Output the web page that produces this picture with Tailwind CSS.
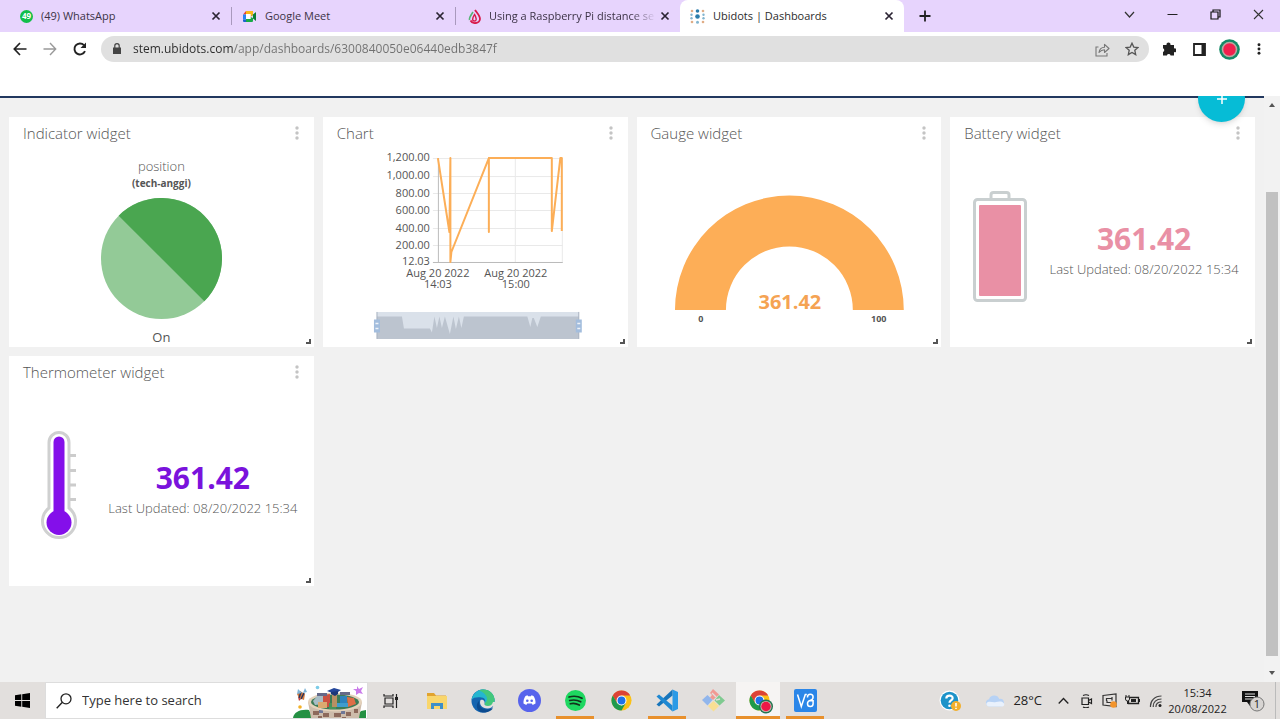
<!DOCTYPE html>
<html lang="en">
<head>
<meta charset="utf-8">
<meta name="viewport" content="width=device-width, initial-scale=1">
<title>Ubidots | Dashboards</title>
<script src="https://cdn.jsdelivr.net/npm/@tailwindcss/browser@4"></script>
</head>
<body class="flex h-screen flex-col overflow-hidden bg-[#f1f1f1] font-['Open_Sans','Noto_Sans',sans-serif] text-[#555]">

<svg class="hidden" aria-hidden="true">
  <symbol id="close" viewBox="0 0 10 10"><path d="M1.5 1.5l7 7M8.5 1.5l-7 7" stroke="#2b2433" stroke-width="1.7" fill="none"/></symbol>
  <symbol id="kebab" viewBox="0 0 4 14"><circle cx="2" cy="2" r="1.7"/><circle cx="2" cy="7" r="1.7"/><circle cx="2" cy="12" r="1.7"/></symbol>
  <symbol id="grip" viewBox="0 0 6 6"><path d="M5 1v4H1" stroke="#555" stroke-width="2" fill="none"/></symbol>
  <symbol id="chrome" viewBox="0 0 24 24">
    <circle cx="12" cy="12" r="11.5" fill="#fbc116"/>
    <path d="M12 6.300H22A11.500 11.500 0 0 0 2 6.300L7 15z" fill="#dc4336"/>
    <path d="M2 6.300L7 14.900L12 17.700L16.900 14.900L12 23.500A11.500 11.500 0 0 1 2 6.300z" fill="#1e9a4c"/>
    <circle cx="12" cy="12" r="5.700" fill="#fff"/><circle cx="12" cy="12" r="4.500" fill="#1f72e8"/>
  </symbol>
</svg>

<!-- Tab strip -->
<header class="flex h-8 shrink-0 items-stretch bg-[#e7d4fd] pl-2 text-[11px] text-[#3c3346]">
  <div class="flex min-w-0 flex-1 items-stretch">
    <div class="flex w-56 items-center pl-3">
      <svg class="mr-2 size-[13px] shrink-0" viewBox="0 0 13 13"><circle cx="6.500" cy="6.500" r="6.500" fill="#12bf4b"/><text x="6.500" y="9.300" font-size="8" font-weight="700" fill="#fff" text-anchor="middle">49</text></svg>
      <a href="#" class="flex-1 overflow-hidden whitespace-nowrap">(49) WhatsApp</a>
      <button aria-label="Close tab"><svg class="size-2.5"><use href="#close"/></svg></button>
      <span class="ml-2.5 h-[18px] w-px bg-[#a999bd]"></span>
    </div>
    <div class="flex w-56 items-center pl-2.5">
      <svg class="mr-2 size-[15px] shrink-0" viewBox="0 0 15 15"><path d="M4 2h7v4L8.500 8V5H4z" fill="#fbb916"/><path d="M4 2v3.500H1z" fill="#e8412f"/><path d="M1 5.500h3v5H1z" fill="#2584f4"/><path d="M1 10.500h3V13H2a1 1 0 0 1-1-1z" fill="#1c62cf"/><path d="M4 10h4.500V8l2.500 1v3a1 1 0 0 1-1 1H4z" fill="#18ab47"/><path d="M4 5h4.500v5H4z" fill="#fff"/><path d="M8.500 7.500L14 3v9l-3-2.400V6z" fill="#0b7f35"/></svg>
      <a href="#" class="flex-1 overflow-hidden whitespace-nowrap">Google Meet</a>
      <button aria-label="Close tab"><svg class="size-2.5"><use href="#close"/></svg></button>
      <span class="ml-2.5 h-[18px] w-px bg-[#a999bd]"></span>
    </div>
    <div class="flex w-56 items-center pr-2.5 pl-3">
      <svg class="mr-2 h-[15px] w-[13px] shrink-0" viewBox="0 0 13 15"><path d="M7 1C9.500 4.500 12 7 12 10a5 4.500 0 0 1-9.500 1.500" fill="none" stroke="#d81b4a" stroke-width="1.800"/><path d="M6.500 5.500C8.500 8.500 9 12 6.500 12S4 9.500 6.500 5.500z" fill="none" stroke="#d81b4a" stroke-width="1.400"/><path d="M5 3C3.500 5.500 1 8 1.500 11" fill="none" stroke="#57b478" stroke-width="1.600"/></svg>
      <a href="#" class="mr-1 flex-1 overflow-hidden mask-r-from-85% whitespace-nowrap">Using a Raspberry Pi distance se</a>
      <button aria-label="Close tab"><svg class="size-2.5"><use href="#close"/></svg></button>
    </div>
    <div class="flex w-56 items-center rounded-t-lg bg-white pr-2.5 pl-2.5 text-[#2c2c2c]">
      <svg class="mr-2 size-[15px] shrink-0" viewBox="0 0 15 15"><g fill="#e0ad86"><circle cx="2" cy="2" r="1.300"/><circle cx="13" cy="2" r="1.300"/><circle cx="2" cy="13" r="1.300"/><circle cx="13" cy="13" r="1.300"/></g><g fill="#83b5cf"><circle cx="1.500" cy="5.700" r="1.200"/><circle cx="1.500" cy="9.300" r="1.200"/><circle cx="13.500" cy="5.700" r="1.200"/><circle cx="13.500" cy="9.300" r="1.200"/><circle cx="7.500" cy="13.200" r="1.500"/></g><g fill="#2a7cab"><circle cx="7.500" cy="2" r="1.800"/><circle cx="7.500" cy="7.500" r="2.300"/></g></svg>
      <a href="#" class="flex-1 overflow-hidden whitespace-nowrap">Ubidots | Dashboards</a>
      <button aria-label="Close tab"><svg class="size-2.5"><use href="#close"/></svg></button>
    </div>
    <button aria-label="New tab" class="flex w-[42px] items-center justify-center"><svg class="size-3" viewBox="0 0 12 12"><path d="M6 .5v11M.5 6h11" stroke="#222" stroke-width="1.800"/></svg></button>
  </div>
  <div class="flex items-center pb-1">
    <button aria-label="Search tabs" class="flex w-[43px] justify-center"><svg class="size-[11px]" viewBox="0 0 11 11"><path d="M1 3l4.500 5L10 3" stroke="#333" fill="none" stroke-width="1.200"/></svg></button>
    <button aria-label="Minimize" class="flex w-[43px] justify-center"><svg class="size-[11px]" viewBox="0 0 11 11"><path d="M.5 5.500h10" stroke="#222"/></svg></button>
    <button aria-label="Restore" class="flex w-[43px] justify-center"><svg class="size-[11px]" viewBox="0 0 11 11"><path d="M1 3h7v7H1zM3 3V1h7v7H8" stroke="#111" stroke-width="1.200" fill="none"/></svg></button>
    <button aria-label="Close window" class="flex w-[43px] justify-center"><svg class="size-[11px]" viewBox="0 0 11 11"><path d="M1 1l9 9M10 1l-9 9" stroke="#333" stroke-width="1.100"/></svg></button>
  </div>
</header>

<!-- Address bar -->
<nav class="flex h-[34px] shrink-0 items-center bg-white pr-1.5 pl-[5px]">
  <button aria-label="Back" class="flex w-[30px] justify-center"><svg class="size-3.5" viewBox="0 0 14 14"><path d="M13.500 7H1.500M7 1L1.300 7L7 13" stroke="#222" stroke-width="1.700" fill="none"/></svg></button>
  <button aria-label="Forward" class="flex w-[30px] justify-center"><svg class="size-3.5" viewBox="0 0 14 14"><path d="M.5 7h12M7 1l5.700 6L7 13" stroke="#999" stroke-width="1.400" fill="none"/></svg></button>
  <button aria-label="Reload" class="flex w-[30px] justify-center"><svg class="size-3.5" viewBox="0 0 14 14"><path d="M12 9.200A5.500 5.500 0 1 1 11 3.200" stroke="#222" stroke-width="1.900" fill="none"/><path d="M13 .5v5.500H7.500z" fill="#222"/></svg></button>
  <div class="mr-[5px] ml-1.5 flex h-[26px] min-w-0 flex-1 items-center rounded-full bg-[#e0e0e0] pr-0.5 pl-3">
    <svg class="mr-3 h-3 w-2 shrink-0" viewBox="0 0 8 12"><path d="M0 4.500h8V11H0z" fill="#444"/><path d="M1.800 5V2.800a2.200 2.200 0 0 1 4.400 0V5" stroke="#444" stroke-width="1.200" fill="none"/></svg>
    <input aria-label="Address" type="text" value="stem.ubidots.com/app/dashboards/6300840050e06440edb3847f" class="min-w-0 flex-1 bg-[linear-gradient(90deg,#2b2b2b_101px,#707070_101px)] bg-clip-text text-[12px] text-transparent outline-none">
    <button aria-label="Share" class="flex w-[30px] justify-center"><svg class="size-[15px]" viewBox="0 0 15 15"><path d="M3.500 5H1v9h11v-3" stroke="#777" stroke-width="1.100" fill="none"/><path d="M4 10.500C4.500 7 6.500 5.300 9.500 5.200V2.300L14 6.500l-4.500 4V7.800C7 7.800 5.500 8.700 4 10.500z" stroke="#777" stroke-width="1.100" fill="none" stroke-linejoin="round"/></svg></button>
    <button aria-label="Bookmark" class="flex w-[30px] justify-center"><svg class="size-3.5" viewBox="0 0 14 14"><path d="M7 1.200l1.800 3.900 4.200.4-3.200 2.800.9 4.300L7 10.400l-3.700 2.200.9-4.300L1 5.500l4.200-.4z" stroke="#555" stroke-width="1.300" fill="none"/></svg></button>
  </div>
  <button aria-label="Extensions" class="flex w-[30px] justify-center"><svg class="size-3.5" viewBox="0 0 14 14"><path d="M1 3h3.600a2 2 0 1 1 3.800 0H12v3.400a1.900 1.900 0 1 1 0 3.700V13.500H8.600a1.900 1.900 0 0 0-3.700 0H1V9.900a1.900 1.900 0 0 0 0-3.600z" fill="#222"/></svg></button>
  <button aria-label="Side panel" class="flex w-[30px] justify-center"><svg class="size-[13px]" viewBox="0 0 13 13"><path d="M1 1h11v11H1z" stroke="#222" stroke-width="1.800" fill="none"/><path d="M8.500 1H12v11H8.500z" fill="#222"/></svg></button>
  <button aria-label="Profile" class="flex w-[30px] justify-center"><svg class="size-[21px]" viewBox="0 0 21 21"><circle cx="10.500" cy="10.500" r="10.300" fill="#138a66"/><circle cx="10.500" cy="10.500" r="7.800" fill="#b9a8a0"/><circle cx="10.500" cy="10.500" r="6.200" fill="#f1204d"/></svg></button>
  <button aria-label="Browser menu" class="flex w-[30px] justify-center"><svg class="h-3 w-1 fill-[#222]"><use href="#kebab"/></svg></button>
</nav>
<div class="h-[30px] shrink-0 bg-white"></div>

<!-- Dashboard viewport -->
<div class="flex min-h-0 flex-1">
  <main class="relative min-w-0 flex-1 overflow-hidden">
    <div class="h-0.5 bg-[#22385f]"></div>
    <div class="grid auto-rows-[230px] grid-cols-4 gap-[9px] px-[9px] pt-[19px]">

      <section class="relative flex flex-col bg-white">
        <div class="flex h-8 shrink-0 items-center justify-between pr-[15px] pl-3.5"><h2 class="text-[15px] leading-6 font-light">Indicator widget</h2><button aria-label="Widget menu"><svg class="h-3.5 w-1 fill-[#c4c4c4]"><use href="#kebab"/></svg></button></div>
        <div class="flex flex-1 flex-col items-center pt-[7px]">
          <p class="text-[13px] leading-5 font-light">position</p>
          <p class="text-[10px] leading-[14px] font-bold">(tech-anggi)</p>
          <svg class="mt-2 size-[121px]" viewBox="0 0 121 121"><circle cx="60.500" cy="60.500" r="60.500" fill="#93ca97"/><path d="M17.700 17.700A60.500 60.500 0 0 1 103.300 103.300z" fill="#4aa650"/></svg>
          <p class="mt-2 text-[13px] leading-5">On</p>
        </div>
        <svg class="absolute right-[3px] bottom-[3px] size-1.5"><use href="#grip"/></svg>
      </section>

      <section class="relative flex flex-col bg-white">
        <div class="flex h-8 shrink-0 items-center justify-between pr-[15px] pl-3.5"><h2 class="text-[15px] leading-6 font-light">Chart</h2><button aria-label="Widget menu"><svg class="h-3.5 w-1 fill-[#c4c4c4]"><use href="#kebab"/></svg></button></div>
        <svg class="min-h-0 w-full flex-1" viewBox="323 149 305 198" role="img" aria-label="Distance over time">
          <path d="M433 158.500H563M433 176.500H563M433 193.500H563M433 210.500H563M433 228.500H563M433 245.500H563M515.500 158V262M562.500 158V262" stroke="#e9e9e9" fill="none"/>
          <path d="M438.500 158V262.500M433 262.500H563" stroke="#bbb" fill="none"/>
          <path d="M438 158L449.500 232L450.500 158V262L451.500 252L489 158V232V158H552V231L560.500 158H562V231" stroke="#fcae57" stroke-width="2" fill="none" stroke-linejoin="round"/>
          <g font-size="11" fill="#555" text-anchor="end"><text x="430" y="161">1,200.00</text><text x="430" y="179">1,000.00</text><text x="430" y="197">800.00</text><text x="430" y="214">600.00</text><text x="430" y="232">400.00</text><text x="430" y="249">200.00</text><text x="430" y="265">12.03</text></g>
          <g font-size="11" fill="#555" text-anchor="middle"><text x="438" y="277">Aug 20 2022</text><text x="438" y="288">14:03</text><text x="516" y="277">Aug 20 2022</text><text x="516" y="288">15:00</text></g>
          <path d="M377 312h202v27H377z" fill="#dae1ea"/>
          <path d="M377 316.500H402L404 328.500H430L432 332.500L434.500 316.500L437 328L439.500 316.500L442 328L445 316.500L450 334L453.500 316.500L456 329L459 316.500L461.500 328L464 316.500H527.500L530.500 327L532.500 318L534 318L537.500 327L541 316.500H579V339H377z" fill="#bcc4cf"/>
          <path d="M377 312v27M579 312v27" stroke="#a7b1c0"/>
          <path d="M374 319.500h6v13h-6zM576 319.500h6v13h-6z" fill="#a3bddd"/>
          <path d="M375.500 323.500h3M375.500 328.500h3M577.500 323.500h3M577.500 328.500h3" stroke="#eef3f9" stroke-width="1.500"/>
        </svg>
        <svg class="absolute right-[3px] bottom-[3px] size-1.5"><use href="#grip"/></svg>
      </section>

      <section class="relative flex flex-col bg-white">
        <div class="flex h-8 shrink-0 items-center justify-between pr-[15px] pl-3.5"><h2 class="text-[15px] leading-6 font-light">Gauge widget</h2><button aria-label="Widget menu"><svg class="h-3.5 w-1 fill-[#c4c4c4]"><use href="#kebab"/></svg></button></div>
        <svg class="min-h-0 w-full flex-1" viewBox="637 149 305 198" role="img" aria-label="Gauge from 0 to 100">
          <path d="M675 310A114.500 114.500 0 0 1 904 310H853A63.500 63.500 0 0 0 726 310z" fill="#fdae57"/>
          <text x="790" y="309" font-size="20" font-weight="700" fill="#f5a353" text-anchor="middle">361.42</text>
          <g font-size="9" font-weight="700" fill="#555" text-anchor="middle"><text x="701" y="322">0</text><text x="879" y="322">100</text></g>
        </svg>
        <svg class="absolute right-[3px] bottom-[3px] size-1.5"><use href="#grip"/></svg>
      </section>

      <section class="relative flex flex-col bg-white">
        <div class="flex h-8 shrink-0 items-center justify-between pr-[15px] pl-3.5"><h2 class="text-[15px] leading-6 font-light">Battery widget</h2><button aria-label="Widget menu"><svg class="h-3.5 w-1 fill-[#c4c4c4]"><use href="#kebab"/></svg></button></div>
        <div class="flex flex-1 items-center pb-1">
          <div class="flex w-[83px] shrink-0 justify-center pl-4">
            <svg class="h-[111px] w-[54px]" viewBox="0 0 54 111"><path d="M18 9V4a2.500 2.500 0 0 1 2.500-2.500h13A2.500 2.500 0 0 1 36 4v5" fill="none" stroke="#c9cfd0" stroke-width="3"/><rect x="1.500" y="8.500" width="51" height="101" rx="3" fill="#fff" stroke="#c9cfd0" stroke-width="3"/><rect x="6" y="14" width="42" height="91" rx="1" fill="#e990a5"/></svg>
          </div>
          <div class="min-w-0 flex-1 pt-2.5 text-center">
            <p class="text-[30px] leading-9 font-bold text-[#e990a5]">361.42</p>
            <p class="text-[13px] leading-6 font-light">Last Updated: 08/20/2022 15:34</p>
          </div>
        </div>
        <svg class="absolute right-[3px] bottom-[3px] size-1.5"><use href="#grip"/></svg>
      </section>

      <section class="relative flex flex-col bg-white">
        <div class="flex h-8 shrink-0 items-center justify-between pr-[15px] pl-3.5"><h2 class="text-[15px] leading-6 font-light">Thermometer widget</h2><button aria-label="Widget menu"><svg class="h-3.5 w-1 fill-[#c4c4c4]"><use href="#kebab"/></svg></button></div>
        <div class="flex flex-1 items-center pb-1">
          <div class="flex w-[83px] shrink-0 justify-center pl-4">
            <svg class="h-[111px] w-[38px]" viewBox="0 0 38 111"><path d="M9 12.500a10 10 0 0 1 20 0V78a16.500 16.500 0 1 1-20 0z" fill="#fff" stroke="#cfd0d0" stroke-width="3"/><path d="M30 25.500h6M30 40.500h6M30 55h6M30 69.500h6" stroke="#ccc" stroke-width="3"/><path d="M19 12v78" stroke="#840fea" stroke-width="11" stroke-linecap="round"/><circle cx="19" cy="92.500" r="12.500" fill="#840fea"/></svg>
          </div>
          <div class="min-w-0 flex-1 pt-2.5 text-center">
            <p class="text-[30px] leading-9 font-bold text-[#7a12dc]">361.42</p>
            <p class="text-[13px] leading-6 font-light">Last Updated: 08/20/2022 15:34</p>
          </div>
        </div>
        <svg class="absolute right-[3px] bottom-[3px] size-1.5"><use href="#grip"/></svg>
      </section>
    </div>
    <button aria-label="Add widget" class="absolute -top-[21px] right-[19px] flex size-[47px] items-center justify-center rounded-full bg-[#06bcd6] shadow-md"><svg class="size-2.5" viewBox="0 0 10 10"><path d="M5 0v10M0 5h10" stroke="#fff" stroke-width="1.500"/></svg></button>
  </main>

  <div class="flex w-4 flex-col items-center bg-[#f2f2f2]" aria-hidden="true">
    <svg class="h-[17px] w-2 shrink-0" viewBox="0 0 8 17"><path d="M1 11l3-4 3 4z" fill="#555"/></svg>
    <div class="flex-[79]"></div>
    <div class="w-3 flex-[464] bg-[#c1c1c1]"></div>
    <div class="flex-[9]"></div>
    <svg class="h-[17px] w-2 shrink-0" viewBox="0 0 8 17"><path d="M1 6l3 4 3-4z" fill="#555"/></svg>
  </div>
</div>

<!-- Taskbar -->
<footer class="flex h-[37px] shrink-0 items-stretch bg-[#e2dfdd]">
  <button aria-label="Start" class="flex w-[45px] items-center justify-center"><svg class="size-[15px]" viewBox="0 0 15 15"><path d="M0 2.200L6.300 1.300V7H0zM7.200 1.200L15 0V7H7.200zM0 8h6.300v5.700L0 12.800zM7.200 8H15v7l-7.800-1.200z" fill="#000"/></svg></button>
  <label class="flex w-[323px] items-center border border-[#ddd] bg-white pl-2.5">
    <svg class="mr-2.5 size-4 shrink-0" viewBox="0 0 16 16"><circle cx="10" cy="5.800" r="5" stroke="#222" stroke-width="1.300" fill="none"/><path d="M6.400 9.300L.7 15.200" stroke="#222" stroke-width="1.400"/></svg>
    <input type="text" aria-label="Search" placeholder="Type here to search" class="w-0 flex-1 text-[13px] text-[#333] outline-none placeholder:text-[#333]">
    <svg class="h-[35px] w-[74px] shrink-0" viewBox="0 0 74 35">
      <path d="M0 35C1 29 7 26 16 27L20 35z" fill="#249043"/><path d="M68 28l5-1v8H62z" fill="#249043"/>
      <path d="M15 19L18 35H66L69 19z" fill="#cdbcab"/>
      <g fill="#8d6a5c"><path d="M20 28h6v4h-6zM30 30h6v4h-6zM41 30h7v4h-7zM53 29h5v4h-5zM61 26h4v4h-4zM25 33h4v2h-4zM49 34h4v1h-4z"/></g>
      <g fill="#6f7797"><path d="M26 27h4v3h-4zM48 28h4v3h-4z"/></g>
      <ellipse cx="42" cy="19" rx="27" ry="9.500" fill="#e4d2bb"/><ellipse cx="42" cy="19" rx="24" ry="7.500" fill="#3d7b56"/>
      <path d="M20 18l5-6 6 1v8l-9 1z" fill="#a8bdc6"/><path d="M30 12l7-1v13h-7z" fill="#cc5142"/><path d="M47 13h7v11h-7z" fill="#2d82bd"/><path d="M54 14l7 1 2 6-8 3z" fill="#df6e47"/><path d="M25 19h9v6h-9z" fill="#dcaa70"/><path d="M36 20h7v6h-7z" fill="#49935a"/><path d="M43 20h12v4H43z" fill="#3f9cce"/>
      <path d="M24 10h10v3H24zM47 9h10v3H47z" fill="#656989"/><path d="M39 11h5v13h-5z" fill="#b99063"/>
      <path d="M34 8l7-3 7 2-6 4z" fill="#25479b"/><path d="M38 9v2l4 2 3-2V8z" fill="#1c3779"/>
      <path d="M7 8l5 3-1 6-5-2-2-4z" fill="#d37a3e"/><path d="M8 9l-2 6M11 10l-3 6" stroke="#29345c" stroke-width="1.500"/><path d="M5 6l4 4-5 1zM12 5l2 4-4 1z" fill="#7eb3d5"/><path d="M5 14l3 2-2 2z" fill="#c13d38"/>
      <circle cx="24.500" cy="4.500" r="1.800" fill="#7ccce8"/><circle cx="7" cy="24" r="1.800" fill="#f3b227"/><path d="M64 3l2 3 4-2-2 4 2 3-4-1-3 2 0-4-3-2 4 0z" fill="#ca7bea"/>
    </svg>
  </label>
  <button aria-label="Task view" class="flex w-[46px] items-center justify-center"><svg class="size-4" viewBox="0 0 16 16"><path d="M1 1v2h9V1M2 5h8v6H2zM1 15v-2h9v2M13.500 1v14" stroke="#222" stroke-width="1.200" fill="none"/><path d="M12 4h3v3h-3z" fill="#222"/></svg></button>
  <button aria-label="File Explorer" class="flex w-[46px] items-center justify-center"><svg class="size-5" viewBox="0 0 20 20"><path d="M0 2h7l2 2.500h10V12H0z" fill="#e1a32f"/><path d="M0 5h20v13H0z" fill="#f9d66c"/><path d="M4 18v-6h12v6h-3v-3H7v3z" fill="#3e8fc8"/></svg></button>
  <button aria-label="Edge" class="flex w-[46px] items-center justify-center"><svg class="size-6" viewBox="0 0 24 24"><circle cx="12" cy="12" r="11.500" fill="#1565b0"/><path d="M.6 11C2 3 8 .5 12 .5c7 0 11.500 5 11.500 10.500 0 4-3 6-6.500 6-2.500 0-4-1-3.500-2.500 1.500-2 1-5.500-3-6C6 8 2 8.500.6 11z" fill="#24b6cf"/><path d="M12 .5c7 0 11.500 5 11.500 10.500 0 4-3 6-6.500 6-2.500 0-4-1-3.500-2.500C18 12 17 5 8 1.300z" fill="#44c77b"/><path d="M8 13c0 6 5 9 13 6.500l1 0C19 23 14 24.500 10 23 4 21 5 13 9.500 11C8.500 11.500 8 12 8 13z" fill="#0c4b8f"/><path d="M9.500 11C7.500 16 12 20 17 19.500c2 0 4-1 5-2.500l2 2v-6h-2c-1 3-3 4-5 4-2.500 0-4-1-3.500-2.500.5-1.500-.5-4.500-4-3.500z" fill="#e2dfdd"/></svg></button>
  <button aria-label="Discord" class="flex w-[46px] items-center justify-center"><svg class="size-[23px]" viewBox="0 0 23 23"><circle cx="11.500" cy="11.500" r="11.500" fill="#5763ec"/><path d="M7.500 7l2-.7.6 1h2.800l.6-1 2 .7c1.500 2.200 2.200 4.800 2 7.500l-2.800 1.500-.9-1.500H9.200L8.300 16l-2.800-1.500c-.2-2.700.5-5.300 2-7.500z" fill="#fff"/><circle cx="9.300" cy="11.700" r="1.300" fill="#5763ec"/><circle cx="13.700" cy="11.700" r="1.300" fill="#5763ec"/></svg></button>
  <button aria-label="Spotify" class="relative flex w-[46px] items-center justify-center"><svg class="size-[21px]" viewBox="0 0 21 21"><circle cx="10.500" cy="10.500" r="10.500" fill="#1ed760"/><path d="M4 7c4.500-1.300 9-.9 13 1.300M4.700 10.500c4-1 7.500-.6 11 1.300M5.300 13.800c3-.8 6-.4 9 1.200" stroke="#12311c" stroke-width="1.700" fill="none" stroke-linecap="round"/></svg><span class="absolute inset-x-1 bottom-0 h-[3px] bg-[#e8902c]"></span></button>
  <button aria-label="Chrome" class="flex w-[46px] items-center justify-center"><svg class="size-[21px]"><use href="#chrome"/></svg></button>
  <button aria-label="Visual Studio Code" class="relative flex w-[46px] items-center justify-center"><svg class="size-[23px]" viewBox="0 0 23 23"><path d="M16.500.5L22 3v17l-5.500 2.500z" fill="#2b9ae6"/><path d="M16.500.5v6L3 17.500l-2.500-2z" fill="#1775bb"/><path d="M16.500 22.500v-6L3 5.500l-2.500 2z" fill="#1f88d2"/></svg><span class="absolute inset-x-1 bottom-0 h-[3px] bg-[#e8902c]"></span></button>
  <button aria-label="Git" class="flex w-[46px] items-center justify-center"><svg class="size-[23px]" viewBox="0 0 23 23"><path d="M11 0l6 5.500-6 5.500-3-2.500 2-2.500-2-2z" fill="#f19a93"/><path d="M5.500 6l5 5-5 5.500L0 11z" fill="#91b6ec"/><path d="M17 6l6 5.500-5.500 5-5-5z" fill="#7fca90"/><path d="M11.500 12l5.500 5-5.500 5.500L6 17z" fill="#f8df93"/><path d="M10 4l4 4M14 11l4-1" stroke="#e2dfdd" stroke-width="1.300"/></svg></button>
  <button aria-label="Chrome, active window" class="relative flex w-[46px] items-center justify-center border-r-2 border-[#e2dfdd] bg-[#f6f4f3] pt-0.5 pl-1.5"><svg class="size-6" viewBox="0 0 24 24"><use href="#chrome" width="21" height="21"/><circle cx="17" cy="16.500" r="7" fill="#21734f"/><circle cx="17" cy="16.500" r="5.600" fill="#c9b9b0"/><circle cx="17" cy="16.500" r="4.700" fill="#ed1846"/></svg><span class="absolute inset-x-0 bottom-0 h-[3px] bg-[#e8902c]"></span></button>
  <button aria-label="VNC Viewer" class="relative flex w-[46px] items-center justify-center"><svg class="size-[23px]" viewBox="0 0 23 23"><rect width="23" height="23" rx="2" fill="#2b86e8"/><path d="M3.500 5.500l3.800 12 4-12h1.500M13.500 8.500V8a2.800 2.800 0 0 1 5.600 0c0 2-1 3-3 3.500s-2.600 1.500-2.600 3.200a2.800 2.800 0 0 0 5.600 0v-3h-3" stroke="#fff" stroke-width="1.500" fill="none"/></svg><span class="absolute inset-x-1 bottom-0 h-[3px] bg-[#e8902c]"></span></button>

  <div class="ml-auto flex items-center">
    <button aria-label="Help" class="mr-6 flex"><svg class="size-[22px]" viewBox="0 0 22 22"><circle cx="10.500" cy="10.500" r="10" fill="#fff"/><circle cx="10.500" cy="10.500" r="8.800" fill="#1c93c9"/><path d="M7.300 8.500c0-4 6.700-3.800 6.300-.2C13.300 10.500 10.500 10.500 10.500 12.800" stroke="#fff" stroke-width="2.200" fill="none"/><circle cx="10.500" cy="15.800" r="1.300" fill="#fff"/><circle cx="17" cy="16" r="5" fill="#f2b02c"/><path d="M17 13v3.500M17 17.700v1.300" stroke="#fff" stroke-width="1.500"/></svg></button>
    <button class="flex items-center gap-2 text-[13px] text-[#222]"><svg class="h-3.5 w-5" viewBox="0 0 20 14"><path d="M4 12.500a3.700 3.700 0 0 1 0-7.300A5.500 5.500 0 0 1 14.300 5a3.800 3.800 0 0 1 1.700 7.500z" fill="#b7d2f5"/><path d="M4 12.500c-3-.5-3.500-3.500-1-4.500 3-1 5 1 8 0s7-1 8 1.500-1 3-3 3z" fill="#e9f1fc"/></svg>28°C</button>
    <button aria-label="Show hidden icons" class="ml-4 flex"><svg class="h-3 w-[11px]" viewBox="0 0 11 12"><path d="M.7 8.500L5.500 3.500l4.800 5" stroke="#222" stroke-width="1.300" fill="none"/></svg></button>
    <button aria-label="Meet now" class="ml-[11px] flex"><svg class="size-3.5" viewBox="0 0 14 14"><path d="M2 4h6.500v6.500H2zM8.500 6.500L11.500 5v4.500l-3-1.500M3 1.500c2-1 4-1 6 0M3 13c2 1 4 1 6 0" stroke="#222" stroke-width="1.200" fill="none"/></svg></button>
    <button aria-label="Update" class="ml-2 flex"><svg class="size-[15px]" viewBox="0 0 15 15"><path d="M1 2.500L14 1v12.500L1 12z" stroke="#333" stroke-width="1.200" fill="none"/><path d="M4.500 8V5.500h5M10 4v3.500M9 9.500H5v-2" stroke="#333" stroke-width="1.200" fill="none"/><circle cx="11.500" cy="11.500" r="3.300" fill="#f2942c"/></svg></button>
    <button aria-label="Battery" class="ml-2 flex"><svg class="size-[15px]" viewBox="0 0 15 15"><path d="M5 4.500h8.500v6H3.500V8" stroke="#222" stroke-width="1.300" fill="none"/><path d="M14 6h1v3h-1zM6 6h5v3H6z" fill="#222"/><path d="M1 2v2M4 2v2M.5 4h4v2a2 2 0 0 1-4 0zM2.500 8v3" stroke="#222" fill="none"/></svg></button>
    <button aria-label="Network" class="ml-[9px] flex"><svg class="size-[13px]" viewBox="0 0 13 13"><path d="M1.500 13C1 6.500 6 2 12.500 2M4.300 13c-.5-5 3.200-8 8.200-8M7 13c-.3-3 2-5.200 5.500-5.200" stroke="#444" stroke-width="1.200" fill="none"/><circle cx="11" cy="11.500" r="1.500" fill="#222"/></svg></button>
    <button class="w-[71px] text-center text-[11px] leading-4 text-[#222]">15:34<br>20/08/2022</button>
    <button aria-label="Notifications" class="ml-[9px] flex"><svg class="size-[23px]" viewBox="0 0 23 23"><path d="M0 2h16v11H8v4l-3-4H0z" fill="#111"/><path d="M3 5h10M3 7.500h10M3 10h7" stroke="#ddd" stroke-width="1.200"/><circle cx="15" cy="15" r="7" fill="#d7d4d2" stroke="#777"/><text x="15" y="19" font-size="11" fill="#222" text-anchor="middle">1</text></svg></button>
    <div class="ml-2.5 h-full w-[5px] border-l border-[#bbb]"></div>
  </div>
</footer>
</body>
</html>
